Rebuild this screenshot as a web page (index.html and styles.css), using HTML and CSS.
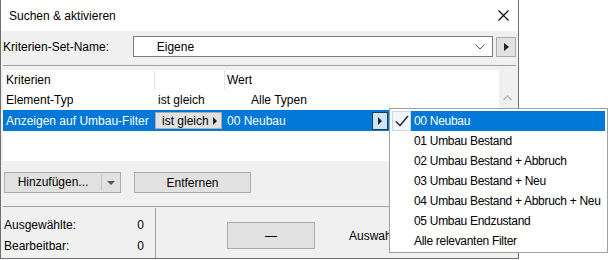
FILE: index.html
```html
<!DOCTYPE html>
<html lang="de">
<head>
    <meta charset="UTF-8">
    <title>Suchen &amp; aktivieren</title>
    <link rel="stylesheet" href="styles.css">
</head>
<body>

    <div class="dialog">
        <!-- Titelleiste -->
        <div class="titlebar">
            <span class="titlebar__text">Suchen &amp; aktivieren</span>
            <svg class="titlebar__close" width="11" height="11" viewBox="0 0 11 11">
                <path d="M0.5 0.5 L10.5 10.5 M10.5 0.5 L0.5 10.5" stroke="#000" stroke-width="1.1" fill="none"/>
            </svg>
        </div>

        <div class="content">
            <!-- Kriterien-Set -->
            <div class="set-row">
                <span class="set-row__label">Kriterien-Set-Name:</span>
                <div class="combo">
                    <span class="combo__text">Eigene</span>
                    <svg width="10" height="6" viewBox="0 0 10 6">
                        <path d="M0.5 0.5 L5 5 L9.5 0.5" stroke="#555" fill="none"/>
                    </svg>
                </div>
                <div class="arrow-btn"><span class="tri"></span></div>
            </div>

            <div class="sep"></div>

            <!-- Kriterienliste -->
            <div class="list">
                <div class="list__main">
                    <div class="list__row list__row--head">
                        <span class="cell cell--name">Kriterien</span>
                        <span class="cell cell--op"></span>
                        <span class="cell cell--val">Wert</span>
                    </div>
                    <div class="list__row">
                        <span class="cell cell--name">Element-Typ</span>
                        <span class="cell cell--op">ist gleich</span>
                        <span class="cell cell--val cell--indent">Alle Typen</span>
                    </div>
                    <div class="list__row list__row--selected">
                        <span class="cell cell--name">Anzeigen auf Umbau-Filter</span>
                        <span class="cell cell--op">
                            <span class="op-btn">ist gleich <span class="tri tri--small"></span></span>
                        </span>
                        <span class="cell cell--val cell--flex">
                            00 Neubau
                            <span class="mini-btn"><span class="tri tri--small"></span></span>
                        </span>
                    </div>
                </div>
                <div class="scrollbar">
                    <svg width="9" height="6" viewBox="0 0 9 6">
                        <path d="M0.5 5 L4.5 1 L8.5 5" stroke="#b5b5b5" stroke-width="1.3" fill="none"/>
                    </svg>
                </div>
            </div>

            <!-- Buttons -->
            <div class="buttons">
                <div class="btn btn--split">
                    <span class="btn__main">Hinzufügen...</span>
                    <span class="btn__drop"><span class="tri-down"></span></span>
                </div>
                <div class="btn">Entfernen</div>
            </div>

            <div class="sep sep--bottom"></div>

            <!-- Status -->
            <div class="footer">
                <div class="stats">
                    <div class="stats__row"><span>Ausgewählte:</span><span>0</span></div>
                    <div class="stats__row"><span>Bearbeitbar:</span><span>0</span></div>
                </div>
                <div class="footer__right">
                    <div class="btn btn--dash">—</div>
                    <span class="footer__label">Auswahl</span>
                </div>
            </div>
        </div>
    </div>

    <!-- Popup-Menü -->
    <div class="menu">
        <div class="menu__item menu__item--active">
            <span class="menu__check">
                <svg width="14" height="12" viewBox="0 0 14 12">
                    <path d="M1 6.5 L5 10.5 L13 1" stroke="#333" stroke-width="1.6" fill="none"/>
                </svg>
            </span>
            <span class="menu__text">00 Neubau</span>
        </div>
        <div class="menu__item"><span class="menu__check"></span><span class="menu__text">01 Umbau Bestand</span></div>
        <div class="menu__item"><span class="menu__check"></span><span class="menu__text">02 Umbau Bestand + Abbruch</span></div>
        <div class="menu__item"><span class="menu__check"></span><span class="menu__text">03 Umbau Bestand + Neu</span></div>
        <div class="menu__item"><span class="menu__check"></span><span class="menu__text">04 Umbau Bestand + Abbruch + Neu</span></div>
        <div class="menu__item"><span class="menu__check"></span><span class="menu__text">05 Umbau Endzustand</span></div>
        <div class="menu__item"><span class="menu__check"></span><span class="menu__text">Alle relevanten Filter</span></div>
    </div>

</body>
</html>
```

FILE: styles.css
```css
body {
    margin: 0;
    background: #ffffff;
    font-family: "Liberation Sans", Arial, sans-serif;
    font-size: 12px;
    color: #000000;
    position: relative;
    white-space: nowrap;
}

.dialog {
    width: 517px;
    height: 258px;
    border-left: 1px solid #707070;
    border-right: 1px solid #707070;
    border-bottom: 1px solid #707070;
    background: #f0f0f0;
    display: flex;
    flex-direction: column;
}

.titlebar {
    height: 31px;
    background: #ffffff;
    display: flex;
    align-items: center;
    justify-content: space-between;
    padding: 0 9px 0 8px;
}

.content {
    padding: 0 2px;
    display: flex;
    flex-direction: column;
}

/* Kriterien-Set */
.set-row {
    margin-top: 5px;
    height: 21px;
    display: flex;
    align-items: center;
}

.set-row__label {
    width: 130px;
}

.combo {
    width: 329px;
    height: 19px;
    border: 1px solid #7a7a7a;
    background: #ffffff;
    display: flex;
    align-items: center;
    justify-content: space-between;
    padding: 0 7px 0 23px;
    box-sizing: content-box;
    margin-right: 3px;
}

.arrow-btn {
    width: 18px;
    height: 18px;
    border: 1px solid #adadad;
    background: #e1e1e1;
    display: flex;
    align-items: center;
    justify-content: center;
}

.tri {
    width: 0;
    height: 0;
    border-top: 4px solid transparent;
    border-bottom: 4px solid transparent;
    border-left: 5px solid #222;
}

.tri--small {
    border-left-width: 4px;
}

.tri-down {
    width: 0;
    height: 0;
    border-left: 4px solid transparent;
    border-right: 4px solid transparent;
    border-top: 4px solid #555;
}

.sep {
    height: 1px;
    background: #a0a0a0;
    margin-top: 8px;
}

/* Liste */
.list {
    margin-top: 4px;
    height: 91px;
    display: flex;
}

.list__main {
    flex: 1;
    background: #ffffff;
}

.list__row {
    height: 20px;
    display: flex;
    align-items: center;
}

.list__row--selected {
    height: 21px;
    background: #0078d7;
    color: #ffffff;
}

.cell {
    height: 100%;
    display: flex;
    align-items: center;
    box-sizing: border-box;
}

.cell--name {
    width: 152px;
    padding-left: 3px;
}

.cell--op {
    width: 70px;
    padding-left: 3px;
}

.cell--val {
    padding-left: 2px;
}

.list__row--head .cell--name,
.list__row--head .cell--op {
    border-right: 1px solid #e5e5e5;
}

.cell--indent {
    padding-left: 26px;
}

.list__row--selected .cell--op {
    padding-left: 0;
}

.op-btn {
    width: 67px;
    height: 17px;
    box-sizing: border-box;
    border: 1px solid #adadad;
    background: #e1e1e1;
    color: #000;
    display: flex;
    align-items: center;
    justify-content: space-between;
    padding: 0 4px 0 6px;
}

.cell--flex {
    width: 163px;
    justify-content: space-between;
}

.mini-btn {
    width: 16px;
    height: 18px;
    box-sizing: border-box;
    border: 1px solid #1d3b5a;
    background: #cce4f7;
    display: flex;
    align-items: center;
    justify-content: center;
}

.scrollbar {
    width: 17px;
    background: #f0f0f0;
    display: flex;
    justify-content: center;
    padding-top: 25px;
    box-sizing: border-box;
}

/* Buttons */
.buttons {
    margin-top: 11px;
    display: flex;
    gap: 13px;
    padding-left: 1px;
}

.btn {
    width: 117px;
    height: 21px;
    box-sizing: border-box;
    border: 1px solid #adadad;
    background: #e1e1e1;
    display: flex;
    align-items: center;
    justify-content: center;
}

.btn--split {
    justify-content: flex-start;
}

.btn__main {
    width: 96px;
    text-align: center;
    border-right: 1px solid #c5c5c5;
    line-height: 15px;
}

.btn__drop {
    flex: 1;
    display: flex;
    justify-content: center;
}

.sep--bottom {
    margin-top: 13px;
}

/* Status */
.footer {
    height: 51px;
    display: flex;
}

.stats {
    width: 153px;
    border-right: 1px solid #a0a0a0;
    margin-top: 1px;
    padding: 7px 11px 0 1px;
    box-sizing: border-box;
    display: flex;
    flex-direction: column;
    gap: 1px;
}

.stats__row {
    height: 20px;
    display: flex;
    align-items: center;
    justify-content: space-between;
}

.footer__right {
    display: flex;
    align-items: center;
    padding-left: 71px;
    padding-top: 6px;
    gap: 34px;
}

.btn--dash {
    width: 88px;
    height: 27px;
}

/* Popup-Menü */
.menu {
    position: absolute;
    left: 389px;
    top: 108px;
    width: 219px;
    height: 145px;
    box-sizing: border-box;
    border: 1px solid #a0a0a0;
    background: #ffffff;
    padding: 2px;
    letter-spacing: -0.3px;
}

.menu__item {
    height: 20px;
    display: flex;
    align-items: center;
}

.menu__check {
    flex-shrink: 0;
    width: 19px;
    height: 20px;
    margin-right: 3px;
    box-sizing: border-box;
    display: flex;
    align-items: center;
    justify-content: center;
}

.menu__item--active {
    background: #0078d7;
    color: #ffffff;
}

.menu__item--active .menu__check {
    background: #f2f7fb;
    border: 1px solid #cbd9e6;
}
```
